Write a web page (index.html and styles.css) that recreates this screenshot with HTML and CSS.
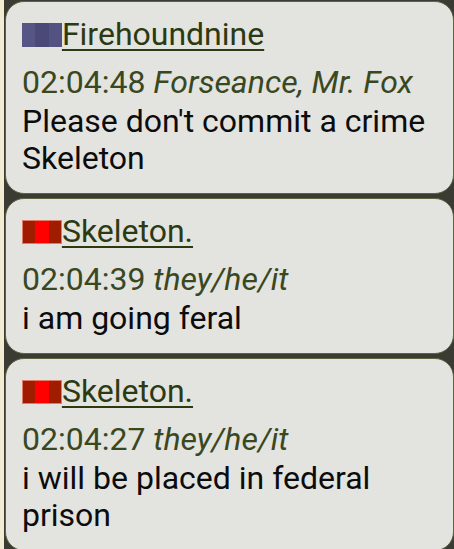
FILE: index.html
```html
<!DOCTYPE html>
<html lang="en">

<head>
    <meta charset="UTF-8">
    <meta name="viewport" content="width=device-width, initial-scale=1.0">
    <title>Chat log</title>
    <link rel="stylesheet" href="styles.css">
</head>

<body>
    <div class="log">
        <div class="msg">
            <div class="who">
                <span class="flag">
                    <i style="background:#575585"></i><i style="background:#4b4977"></i><i style="background:#545281"></i>
                </span><a href="#" class="name">Firehoundnine</a>
            </div>
            <p class="meta">02:04:48 <em>Forseance, Mr. Fox</em></p>
            <p class="text">Please don't commit a crime Skeleton</p>
        </div>
        <div class="msg">
            <div class="who">
                <span class="flag red">
                    <i style="background:#a01c00"></i><i style="background:#ff0000"></i><i style="background:#a01c00"></i>
                </span><a href="#" class="name">Skeleton.</a>
            </div>
            <p class="meta">02:04:39 <em>they/he/it</em></p>
            <p class="text">i am going feral</p>
        </div>
        <div class="msg">
            <div class="who">
                <span class="flag red">
                    <i style="background:#a01c00"></i><i style="background:#ff0000"></i><i style="background:#a01c00"></i>
                </span><a href="#" class="name">Skeleton.</a>
            </div>
            <p class="meta">02:04:27 <em>they/he/it</em></p>
            <p class="text">i will be placed in federal prison</p>
        </div>
    </div>
</body>

</html>
```

FILE: styles.css
```css
* {
    margin: 0;
    padding: 0;
    box-sizing: border-box;
}

body {
    font-family: Roboto, 'Noto Sans', sans-serif;
    background: #3a3b33;
    width: 454px;
    height: 549px;
    overflow: hidden;
    border-left: 4px solid #f2ecd2;
}

.log {
    display: flex;
    flex-direction: column;
    gap: 4px;
    padding: 1px 0 0 1px;
}

.msg {
    background: #e3e3e0;
    border: 1px solid #5a6440;
    border-radius: 19px;
    padding: 14px 10px 16px 16px;
    font-size: 32px;
    line-height: 37px;
}

.who {
    display: flex;
    align-items: center;
    height: 37px;
    margin-bottom: 11px;
}

.flag {
    display: flex;
    height: 24px;
}

.flag i {
    display: block;
    width: 13.3px;
    height: 24px;
}

.flag.red {
    outline: 1px solid #e07a6a;
    outline-offset: -1px;
}

.name {
    color: #2b3a10;
    text-decoration: underline;
    text-underline-offset: 4px;
    text-decoration-thickness: 2px;
}

.meta {
    color: #39481f;
    margin-bottom: 2px;
}

.text {
    color: #0c0c0c;
}
```
